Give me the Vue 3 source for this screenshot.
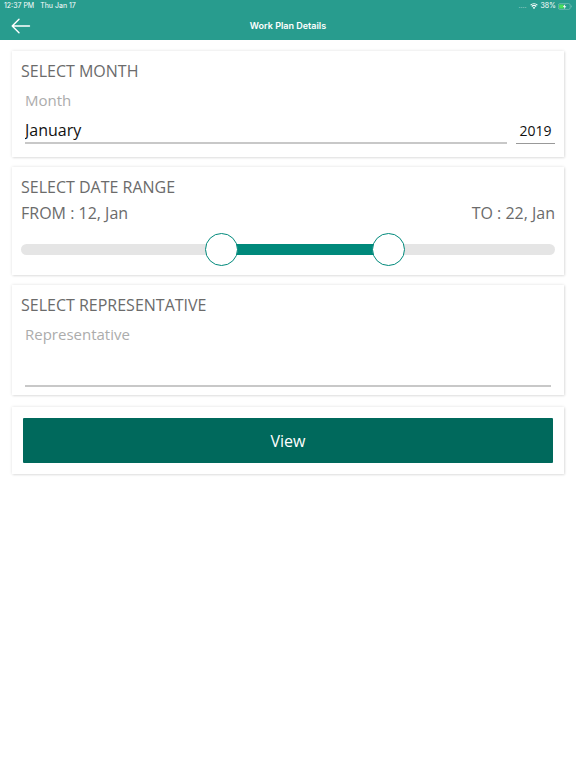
<template>
<div class="page">
    <header class="top-bar">
        <div class="status-bar">
            <div class="status-left">
                <span>12:37 PM</span>
                <span>Thu Jan 17</span>
            </div>
            <div class="status-right">
                <span class="signal">....</span>
                <svg class="wifi" viewBox="0 0 16 12" aria-hidden="true">
                    <path d="M1.2 4.4a9.7 9.7 0 0 1 13.6 0M3.6 7a6.3 6.3 0 0 1 8.8 0" fill="none" stroke="#fff" stroke-width="2.2" />
                    <path d="M8 12 5.4 9.3a3.8 3.8 0 0 1 5.2 0z" fill="#fff" />
                </svg>
                <span>38%</span>
                <svg class="battery" viewBox="0 0 30 14" aria-hidden="true">
                    <rect x="0.8" y="0.8" width="25.4" height="12.4" rx="3.5" fill="none" stroke="#7fc4bb" stroke-width="1.4" />
                    <rect x="2.5" y="2.5" width="10" height="9" rx="1.5" fill="#4be05c" />
                    <path d="M28 4.5c2 1 2 4 0 5z" fill="#7fc4bb" />
                    <path d="M15.5 1.5 10.5 8h3.2l-1.2 4.8L18 6.2h-3.4z" fill="#fff" />
                </svg>
            </div>
        </div>
        <nav class="nav-bar">
            <button type="button" class="back-btn" aria-label="Back">
                <svg viewBox="0 0 20 16" aria-hidden="true">
                    <path d="M8 1.2 1.2 8 8 14.8M1.2 8H18.5" fill="none" stroke="#fff" stroke-width="1.4" stroke-linecap="round" stroke-linejoin="round" />
                </svg>
            </button>
            <h1>Work Plan Details</h1>
        </nav>
    </header>

    <form class="content" @submit.prevent>
        <section class="card month-card">
            <h2>SELECT MONTH</h2>
            <div class="month-row">
                <div class="field">
                    <label for="month">Month</label>
                    <select id="month" v-model="month">
                        <option v-for="name in months" :key="name">{{ name }}</option>
                    </select>
                </div>
                <input v-model="year" class="year" type="text" inputmode="numeric" aria-label="Year">
            </div>
        </section>

        <section class="card range-card">
            <h2>SELECT DATE RANGE</h2>
            <div class="range-labels">
                <label for="from">FROM : {{ from }}, {{ shortMonth }}</label>
                <label for="to">TO : {{ to }}, {{ shortMonth }}</label>
            </div>
            <div class="range" :style="{ '--from': fromRatio, '--to': toRatio }">
                <div class="track"></div>
                <input id="from" v-model.number="from" type="range" min="1" :max="lastDay">
                <input id="to" v-model.number="to" type="range" min="1" :max="lastDay">
            </div>
        </section>

        <section class="card rep-card">
            <h2>SELECT REPRESENTATIVE</h2>
            <div class="field">
                <label for="representative">Representative</label>
                <input id="representative" v-model="representative" type="text">
            </div>
        </section>

        <section class="card action-card">
            <button type="submit" class="view-btn">View</button>
        </section>
    </form>
</div>
</template>

<script setup>
import { ref, computed } from 'vue';

const months = [
    'January', 'February', 'March', 'April', 'May', 'June',
    'July', 'August', 'September', 'October', 'November', 'December'
];

const month = ref('January');
const year = ref('2019');
const from = ref(12);
const to = ref(22);
const representative = ref('');

const shortMonth = computed(() => month.value.slice(0, 3));
const lastDay = computed(() => new Date(Number(year.value), months.indexOf(month.value) + 1, 0).getDate() || 31);
const fromRatio = computed(() => (from.value - 1) / (lastDay.value - 1));
const toRatio = computed(() => (to.value - 1) / (lastDay.value - 1));
</script>

<style>
body {
    background: #fff;
}
</style>

<style scoped>
.page {
    font-family: "Open Sans", "Noto Sans", sans-serif;
    font-size: 16px;
    line-height: 24px;
    color: #6b6b6b;
}

/* --- TOP BAR --- */
.top-bar {
    background: #289c8e;
    color: #fff;
    font-family: Inter, sans-serif;
}

.status-bar {
    display: flex;
    justify-content: space-between;
    padding: 0 4px;
    font-size: 7px;
    line-height: 12px;
}

.status-left {
    display: flex;
    gap: 6px;
}

.status-right {
    display: flex;
    align-items: center;
    gap: 2px;
}

.signal {
    margin-right: 2px;
    opacity: 0.5;
}

.wifi {
    width: 8px;
    height: 6px;
}

.battery {
    width: 14px;
    height: 7px;
}

.nav-bar {
    display: grid;
    grid-template-columns: 1fr auto 1fr;
    align-items: center;
    height: 28px;
    padding: 0 11px;
}

.back-btn {
    justify-self: start;
    display: flex;
    padding: 0;
    border: none;
    background: none;
    cursor: pointer;
}

.back-btn svg {
    width: 20px;
    height: 16px;
}

h1 {
    margin: 0;
    font-size: 9px;
    font-weight: 600;
    line-height: 16px;
}

/* --- CARDS --- */
.content {
    display: flex;
    flex-direction: column;
    gap: 10px;
    padding: 11px 12px;
}

.card {
    padding: 8px 9px;
    background: #fff;
    box-shadow: 0 0 3px rgba(0, 0, 0, 0.12), 1px 1px 2px rgba(0, 0, 0, 0.08);
}

h2 {
    margin: 0;
    font-size: 16px;
    font-weight: 400;
    line-height: 24px;
}

.month-card {
    padding-bottom: 13px;
}

.month-row {
    display: flex;
    align-items: flex-end;
    gap: 9px;
}

.field {
    flex: 1;
    display: flex;
    flex-direction: column;
    gap: 5px;
    margin-top: 5px;
    margin-left: 4px;
}

.field label {
    font-size: 15px;
    line-height: 24px;
    color: #acacac;
}

.field select,
.field input,
.year {
    box-sizing: border-box;
    width: 100%;
    height: 27px;
    margin: 0;
    padding: 0;
    border: none;
    border-bottom: 2px solid #c8c8c8;
    border-radius: 0;
    outline: none;
    appearance: none;
    background: none;
    font-family: inherit;
    font-size: 16px;
    color: #111;
}

.month-row .year {
    width: 39px;
    border-bottom: 1px solid #999;
    font-size: 14px;
    text-align: center;
}

.rep-card .field {
    margin-right: 4px;
}

.rep-card .field input {
    height: 36px;
}

/* --- DATE RANGE --- */
.range-card {
    padding-bottom: 9px;
}

.range-labels {
    display: flex;
    justify-content: space-between;
    margin-top: 2px;
}

.range {
    display: grid;
    align-items: center;
    margin-top: 8px;
}

.range > * {
    grid-area: 1 / 1;
}

.track {
    --start: calc(16px + (100% - 33px) * var(--from));
    --end: calc(16px + (100% - 33px) * var(--to));
    height: 11px;
    border-radius: 6px;
    background: linear-gradient(to right, #e5e5e5 var(--start), #00897b var(--start), #00897b var(--end), #e5e5e5 var(--end));
}

.range input {
    width: 100%;
    height: 33px;
    margin: 0;
    appearance: none;
    background: none;
    pointer-events: none;
}

.range input::-webkit-slider-thumb {
    box-sizing: border-box;
    width: 33px;
    height: 33px;
    border: 1px solid #00897b;
    border-radius: 50%;
    appearance: none;
    background: #fff;
    pointer-events: auto;
    cursor: pointer;
}

/* --- ACTION --- */
.action-card {
    margin-top: 2px;
    padding: 11px;
}

.view-btn {
    display: block;
    width: 100%;
    height: 45px;
    border: none;
    border-radius: 1px;
    background: #00695c;
    color: #fff;
    font-family: inherit;
    font-size: 16px;
    cursor: pointer;
}
</style>
